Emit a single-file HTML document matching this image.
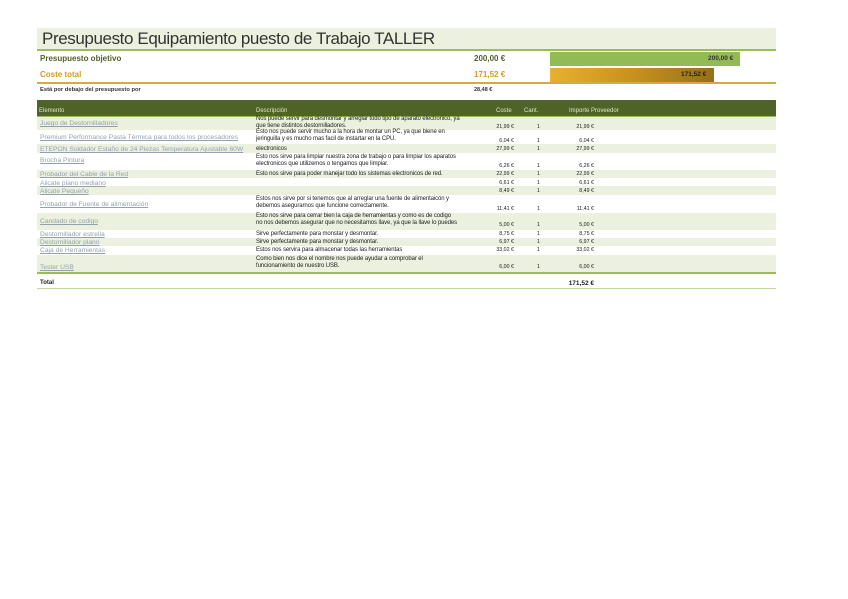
<!DOCTYPE html>
<html><head><meta charset="utf-8"><style>
body{margin:0;width:848px;height:599px;background:#fff;font-family:"Liberation Sans",sans-serif;position:relative;overflow:hidden}
.a{position:absolute;white-space:nowrap}
.r{position:absolute;left:37px;width:739px}
.g{background:#ebf1de}
.t{font-size:5.3px;color:#222;position:absolute;line-height:7px;white-space:nowrap}
.l{color:#93a0b0;text-decoration:underline;font-size:6.7px}
.d{font-size:6px;letter-spacing:-0.1px}
.n{text-align:right;width:40px}
</style></head><body>
<div class="a" style="left:37px;top:28px;width:739px;height:21px;background:#ebf1de;border-bottom:2px solid #9bbb59"></div>
<div class="a" style="left:42px;top:29px;font-size:17px;letter-spacing:-0.4px;color:#333">Presupuesto Equipamiento puesto de Trabajo TALLER</div>
<div class="a" style="left:40px;top:54px;font-size:8px;font-weight:bold;color:#4f6228">Presupuesto objetivo</div>
<div class="a" style="left:474px;top:54px;font-size:8px;font-weight:bold;color:#4f6228">200,00 €</div>
<div class="a" style="left:550px;top:52px;width:190px;height:14px;background:#92bb55"></div>
<div class="a" style="left:708px;top:55px;font-size:6.5px;font-weight:bold;color:#333">200,00 €</div>
<div class="a" style="left:40px;top:70px;font-size:8px;font-weight:bold;color:#d39a2a">Coste total</div>
<div class="a" style="left:474px;top:70px;font-size:8px;font-weight:bold;color:#d39a2a">171,52 €</div>
<div class="a" style="left:550px;top:68px;width:164px;height:14px;background:linear-gradient(90deg,#e8b030,#c8921e 50%,#94701a)"></div>
<div class="a" style="left:681px;top:71px;font-size:6.5px;font-weight:bold;color:#222">171,52 €</div>
<div class="a" style="left:37px;top:82px;width:739px;height:2px;background:#d6a848"></div>
<div class="a" style="left:40px;top:87px;font-size:5.8px;font-weight:bold;color:#333">Está por debajo del presupuesto por</div>
<div class="a" style="left:474px;top:87px;font-size:5.5px;font-weight:bold;color:#333">28,48 €</div>
<div class="r" style="top:100px;height:16px;background:#4f6228;border-bottom:1px solid #9bbb59"></div>
<div class="t" style="left:39px;top:108px;color:#dfe8c8;font-size:6px">Elemento</div>
<div class="t" style="left:256px;top:108px;color:#dfe8c8;font-size:6px">Descripción</div>
<div class="t" style="left:496px;top:108px;color:#dfe8c8;font-size:6px">Coste</div>
<div class="t" style="left:524px;top:108px;color:#dfe8c8;font-size:6px">Cant.</div>
<div class="t" style="left:569px;top:108px;color:#dfe8c8;font-size:6px">Importe Proveedor</div>

<div class="r g" style="top:117px;height:13px"></div>
<div class="r" style="top:130px;height:14px"></div>
<div class="r g" style="top:144px;height:9px"></div>
<div class="r" style="top:153px;height:17px"></div>
<div class="r g" style="top:170px;height:8px"></div>
<div class="r g" style="top:186px;height:9px"></div>
<div class="r g" style="top:213px;height:17px"></div>
<div class="r g" style="top:238px;height:8px"></div>
<div class="r g" style="top:255px;height:17px;border-bottom:2px solid #9bbb59"></div>
<div class="r" style="top:288px;height:1px;background:#c4d79b"></div>

<div class="t l" style="left:40px;top:120px">Juego de Destornilladores</div>
<div class="t l" style="left:40px;top:134px">Premium Performance Pasta Térmica para todos los procesadores</div>
<div class="t l" style="left:40px;top:146px">ETEPON Soldador Estaño de 24 Piezas Temperatura Ajustable 60W</div>
<div class="t l" style="left:40px;top:157px">Brocha Pintura</div>
<div class="t l" style="left:40px;top:171px">Probador del Cable de la Red</div>
<div class="t l" style="left:40px;top:180px">Alicate plano mediano</div>
<div class="t l" style="left:40px;top:188px">Alicate Pequeño</div>
<div class="t l" style="left:40px;top:201px">Probador de Fuente de alimentación</div>
<div class="t l" style="left:40px;top:218px">Candado de codigo</div>
<div class="t l" style="left:40px;top:231px">Destornillador estrella</div>
<div class="t l" style="left:40px;top:239px">Destornillador plano</div>
<div class="t l" style="left:40px;top:247px">Caja de Herramientas</div>
<div class="t l" style="left:40px;top:264px">Tester USB</div>

<div class="t d" style="left:256px;top:116px">Nos puede servir para desmontar y arreglar todo tipo de aparato electronico, ya<br>que tiene distintos destornilladores.</div>
<div class="t d" style="left:256px;top:129px">Esto nos puede servir mucho a la hora de montar un PC, ya que biene en<br>jeringuilla y es mucho mas facil de instartar en la CPU.</div>
<div class="t d" style="left:256px;top:146px">electronicos</div>
<div class="t d" style="left:256px;top:154px">Esto nos sirve para limpiar nuestra zona de trabajo o para limpiar los aparatos<br>electronicos que utilizemos o tengamos que limpiar.</div>
<div class="t d" style="left:256px;top:171px">Esto nos sirve para poder manejar todo los sistemas electronicos de red.</div>
<div class="t d" style="left:256px;top:196px">Estos nos sirve por si tenemos que al arreglar una fuente de alimentaicón y<br>debemos asegurarnos que funcione correctamente.</div>
<div class="t d" style="left:256px;top:213px">Esto nos sirve para cerrar bien la caja de herramientas y como es de codigo<br>no nos debemos asegurar que no necesitamos llave, ya que la llave lo puedes</div>
<div class="t d" style="left:256px;top:231px">Sirve perfectamente para monstar y desmontar.</div>
<div class="t d" style="left:256px;top:239px">Sirve perfectamente para monstar y desmontar.</div>
<div class="t d" style="left:256px;top:247px">Estos nos servira para almacenar todas las herramientas</div>
<div class="t d" style="left:256px;top:256px">Como bien nos dice el nombre nos puede ayudar a comprobar el<br>funcionamiento de nuestro USB.</div>

<div class="t n" style="left:474px;top:124px">21,99 €</div><div class="t" style="left:537px;top:124px">1</div><div class="t n" style="left:554px;top:124px">21,99 €</div>
<div class="t n" style="left:474px;top:138px">6,04 €</div><div class="t" style="left:537px;top:138px">1</div><div class="t n" style="left:554px;top:138px">6,04 €</div>
<div class="t n" style="left:474px;top:146px">27,99 €</div><div class="t" style="left:537px;top:146px">1</div><div class="t n" style="left:554px;top:146px">27,99 €</div>
<div class="t n" style="left:474px;top:163px">6,26 €</div><div class="t" style="left:537px;top:163px">1</div><div class="t n" style="left:554px;top:163px">6,26 €</div>
<div class="t n" style="left:474px;top:171px">22,99 €</div><div class="t" style="left:537px;top:171px">1</div><div class="t n" style="left:554px;top:171px">22,99 €</div>
<div class="t n" style="left:474px;top:180px">6,61 €</div><div class="t" style="left:537px;top:180px">1</div><div class="t n" style="left:554px;top:180px">6,61 €</div>
<div class="t n" style="left:474px;top:188px">8,49 €</div><div class="t" style="left:537px;top:188px">1</div><div class="t n" style="left:554px;top:188px">8,49 €</div>
<div class="t n" style="left:474px;top:206px">11,41 €</div><div class="t" style="left:537px;top:206px">1</div><div class="t n" style="left:554px;top:206px">11,41 €</div>
<div class="t n" style="left:474px;top:222px">5,00 €</div><div class="t" style="left:537px;top:222px">1</div><div class="t n" style="left:554px;top:222px">5,00 €</div>
<div class="t n" style="left:474px;top:231px">8,75 €</div><div class="t" style="left:537px;top:231px">1</div><div class="t n" style="left:554px;top:231px">8,75 €</div>
<div class="t n" style="left:474px;top:239px">6,97 €</div><div class="t" style="left:537px;top:239px">1</div><div class="t n" style="left:554px;top:239px">6,97 €</div>
<div class="t n" style="left:474px;top:247px">33,02 €</div><div class="t" style="left:537px;top:247px">1</div><div class="t n" style="left:554px;top:247px">33,02 €</div>
<div class="t n" style="left:474px;top:264px">6,00 €</div><div class="t" style="left:537px;top:264px">1</div><div class="t n" style="left:554px;top:264px">6,00 €</div>

<div class="t" style="left:40px;top:280px;font-weight:bold;font-size:6px">Total</div>
<div class="t n" style="left:554px;top:280px;font-weight:bold;font-size:6.5px">171,52 €</div>
</body></html>
